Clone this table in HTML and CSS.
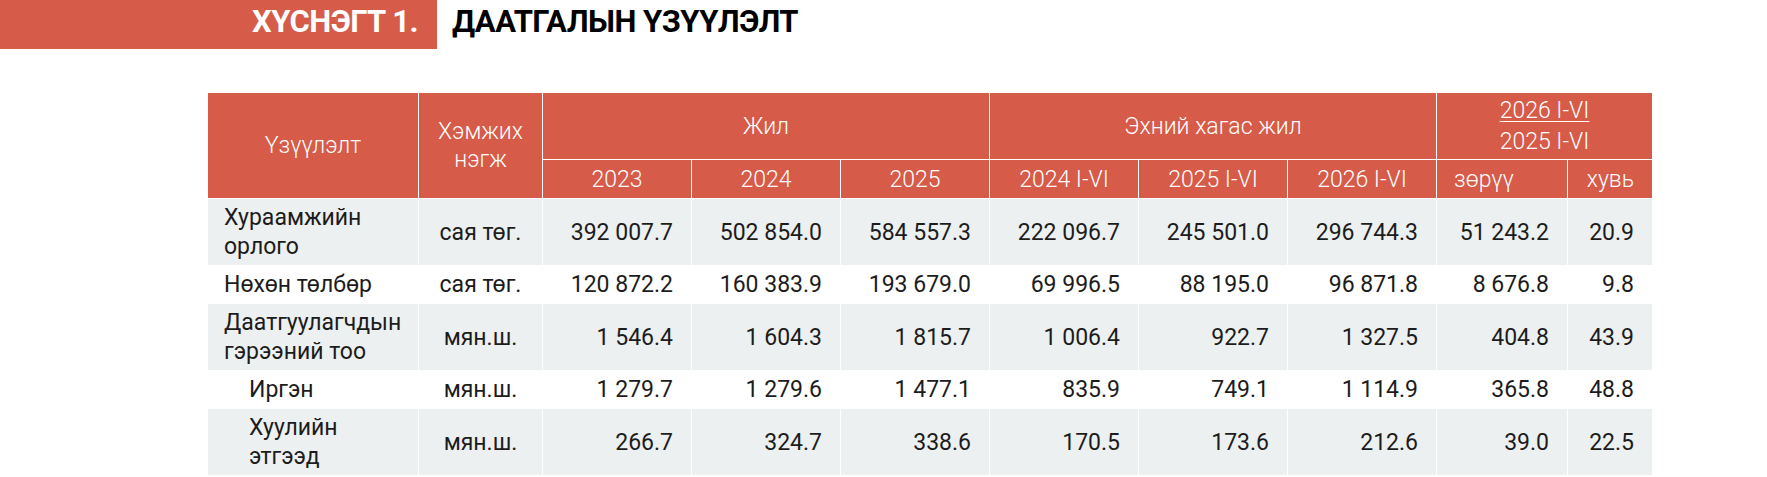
FILE: index.html
```html
<!DOCTYPE html>
<html lang="mn">
<head>
<meta charset="utf-8">
<title>Даатгалын үзүүлэлт</title>
<link rel="stylesheet" href="styles.css">
</head>
<body>
<header class="head">
  <div class="banner">ХҮСНЭГТ 1.</div>
  <h1 class="title">ДААТГАЛЫН ҮЗҮҮЛЭЛТ</h1>
</header>
<table class="data">
  <colgroup>
    <col class="c-name"><col class="c-unit">
    <col class="c-num"><col class="c-num"><col class="c-num">
    <col class="c-num"><col class="c-num"><col class="c-num">
    <col class="c-diff"><col class="c-pct">
  </colgroup>
  <thead>
    <tr class="hr1">
      <th rowspan="2">Үзүүлэлт</th>
      <th rowspan="2" class="unit-h">Хэмжих<br>нэгж</th>
      <th colspan="3">Жил</th>
      <th colspan="3">Эхний хагас жил</th>
      <th colspan="2" class="frac"><span class="num-top">2026 I-VI</span><br>2025 I-VI</th>
    </tr>
    <tr class="hr2">
      <th>2023</th><th>2024</th><th>2025</th>
      <th>2024 I-VI</th><th>2025 I-VI</th><th>2026 I-VI</th>
      <th class="left">зөрүү</th><th class="right">хувь</th>
    </tr>
  </thead>
  <tbody>
    <tr class="alt">
      <td class="name">Хураамжийн<br>орлого</td><td class="unit">сая төг.</td>
      <td>392 007.7</td><td>502 854.0</td><td>584 557.3</td>
      <td>222 096.7</td><td>245 501.0</td><td>296 744.3</td>
      <td>51 243.2</td><td>20.9</td>
    </tr>
    <tr>
      <td class="name">Нөхөн төлбөр</td><td class="unit">сая төг.</td>
      <td>120 872.2</td><td>160 383.9</td><td>193 679.0</td>
      <td>69 996.5</td><td>88 195.0</td><td>96 871.8</td>
      <td>8 676.8</td><td>9.8</td>
    </tr>
    <tr class="alt">
      <td class="name">Даатгуулагчдын<br>гэрээний тоо</td><td class="unit">мян.ш.</td>
      <td>1 546.4</td><td>1 604.3</td><td>1 815.7</td>
      <td>1 006.4</td><td>922.7</td><td>1 327.5</td>
      <td>404.8</td><td>43.9</td>
    </tr>
    <tr>
      <td class="name sub">Иргэн</td><td class="unit">мян.ш.</td>
      <td>1 279.7</td><td>1 279.6</td><td>1 477.1</td>
      <td>835.9</td><td>749.1</td><td>1 114.9</td>
      <td>365.8</td><td>48.8</td>
    </tr>
    <tr class="alt">
      <td class="name sub">Хуулийн<br>этгээд</td><td class="unit">мян.ш.</td>
      <td>266.7</td><td>324.7</td><td>338.6</td>
      <td>170.5</td><td>173.6</td><td>212.6</td>
      <td>39.0</td><td>22.5</td>
    </tr>
  </tbody>
</table>
</body>
</html>
```
FILE: styles.css
```css
html, body {
  margin: 0;
  padding: 0;
  background: #ffffff;
}
body {
  font-family: Roboto, "Noto Sans", "DejaVu Sans", sans-serif;
  color: #1c1c1c;
}
.head {
  display: flex;
  align-items: flex-start;
  height: 49px;
}
.banner {
  width: 437px;
  height: 49px;
  box-sizing: border-box;
  background: #d65b48;
  color: #ffffff;
  font-weight: 700;
  font-size: 31px;
  line-height: 43px;
  letter-spacing: -0.5px;
  text-align: right;
  padding: 0 19px 6px 0;
}
.title {
  margin: 0 0 0 15px;
  font-size: 31px;
  font-weight: 700;
  line-height: 43px;
  letter-spacing: -0.5px;
  color: #000000;
}
.data {
  margin: 43px 0 0 207px;
  border-collapse: collapse;
  table-layout: fixed;
  width: 1445px;
  font-size: 23px;
}
.c-name { width: 211px; }
.c-unit { width: 124px; }
.c-num { width: 149px; }
.c-diff { width: 131px; }
.c-pct { width: 85px; }
.data th, .data td {
  border: 1px solid #ffffff;
  padding: 4px 17px;
  line-height: 29px;
  vertical-align: middle;
}
.data th {
  background: #d65b48;
  color: #ffffff;
  font-weight: 300;
  text-align: center;
  padding: 0 6px;
}
.hr1 { height: 67px; }
.hr2 { height: 39px; }
.data th.unit-h { line-height: 28px; }
.data th.frac { line-height: 31px; }
.num-top { text-decoration: underline; text-decoration-thickness: 1px; text-underline-offset: 3px; }
.data th.left { text-align: left; padding-left: 17px; }
.data th.right { text-align: right; padding-right: 18px; }
.data td {
  text-align: right;
  padding-right: 18px;
}
.data td.name {
  text-align: left;
  padding-left: 16px;
  padding-right: 6px;
}
.data td.name.sub { padding-left: 41px; }
.data td.unit { text-align: center; padding: 4px 4px; }
.data tr.alt td { background: #edf0f1; }
```
